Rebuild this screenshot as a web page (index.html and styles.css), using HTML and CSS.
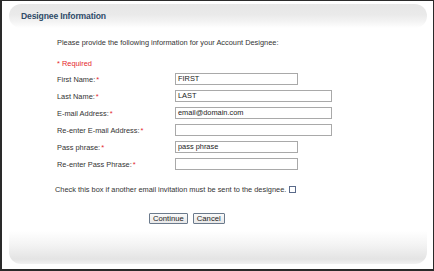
FILE: index.html
```html
<!DOCTYPE html>
<html>
<head>
<meta charset="utf-8">
<link rel="stylesheet" href="styles.css">
</head>
<body>
<div class="frame">
  <div class="header"><span class="title">Designee Information</span></div>
  <div class="content">
    <p class="intro">Please provide the following information for your Account Designee:</p>
    <p class="required">* Required</p>
    <div class="form">
      <div class="row"><span class="label">First Name:<em>*</em></span><span class="field short">FIRST</span></div>
      <div class="row"><span class="label">Last Name:<em>*</em></span><span class="field long">LAST</span></div>
      <div class="row"><span class="label">E-mail Address:<em>*</em></span><span class="field long">email@domain.com</span></div>
      <div class="row"><span class="label">Re-enter E-mail Address:<em>*</em></span><span class="field long"></span></div>
      <div class="row"><span class="label">Pass phrase:<em>*</em></span><span class="field short">pass phrase</span></div>
      <div class="row"><span class="label">Re-enter Pass Phrase:<em>*</em></span><span class="field short"></span></div>
    </div>
    <p class="check">Check this box if another email invitation must be sent to the designee. <span class="box"></span></p>
    <div class="buttons"><span class="btn">Continue</span><span class="btn">Cancel</span></div>
  </div>
  <div class="footer"></div>
</div>
</body>
</html>
```
FILE: styles.css
```css
html, body { margin: 0; padding: 0; background: #fff; }
body { font-family: "Liberation Sans", Arial, sans-serif; }
.frame {
  box-sizing: border-box;
  width: 434px;
  height: 271px;
  border-style: solid;
  border-color: #2a2a2a;
  border-width: 1px 1px 2px 2px;
  background: #fff;
  display: flex;
  flex-direction: column;
  padding: 3px 6px 3px 7px;
}
.header {
  height: 24px;
  border-radius: 12px;
  background: linear-gradient(to bottom, #e6e6e6 0%, #eaeaea 45%, #f4f4f4 75%, #ffffff 100%);
  display: flex;
  align-items: center;
  padding-left: 12px;
  flex: none;
}
.title {
  font-size: 8.6px;
  font-weight: bold;
  color: #2f4b68;
  letter-spacing: -0.15px;
}
.content {
  padding-left: 48px;
  flex: 1;
  font-size: 7.4px;
  color: #333;
}
p { margin: 0; }
.intro { margin-top: 10px; line-height: 9px; }
.required { margin-top: 12px; line-height: 9px; color: #e4262a; }
.form { margin-top: 5px; display: flex; flex-direction: column; gap: 5px; }
.row { display: flex; align-items: center; height: 12px; }
.label { width: 118px; flex: none; }
.label em { font-style: normal; color: #e4262a; margin-left: 1px; }
.field {
  box-sizing: border-box;
  height: 12px;
  border: 1px solid #a9a9a9;
  padding-left: 2px;
  line-height: 10px;
  color: #222;
  background: #fff;
}
.short { width: 123px; }
.long { width: 157px; }
.check { margin-top: 15px; margin-left: -2px; line-height: 9px; display: flex; align-items: center; }
.box {
  display: inline-block;
  width: 7px;
  height: 7px;
  box-sizing: border-box;
  border: 1px solid #5a6a8a;
  margin-left: 3px;
  background: #fff;
}
.buttons { margin-top: 19px; padding-left: 92px; display: flex; gap: 5px; }
.btn {
  box-sizing: border-box;
  height: 11px;
  line-height: 9px;
  padding: 0 3px;
  border: 1px solid #6b7a8c;
  border-radius: 1px;
  background: linear-gradient(#fafafa, #e8e8e8);
  color: #222;
  font-size: 7.7px;
}
.footer {
  flex: none;
  height: 33px;
  margin-bottom: 2px;
  border-radius: 0 0 12px 12px;
  background: linear-gradient(to bottom, #ffffff 0%, #f4f4f4 40%, #e4e4e4 85%, #f2f2f2 100%);
}
```
